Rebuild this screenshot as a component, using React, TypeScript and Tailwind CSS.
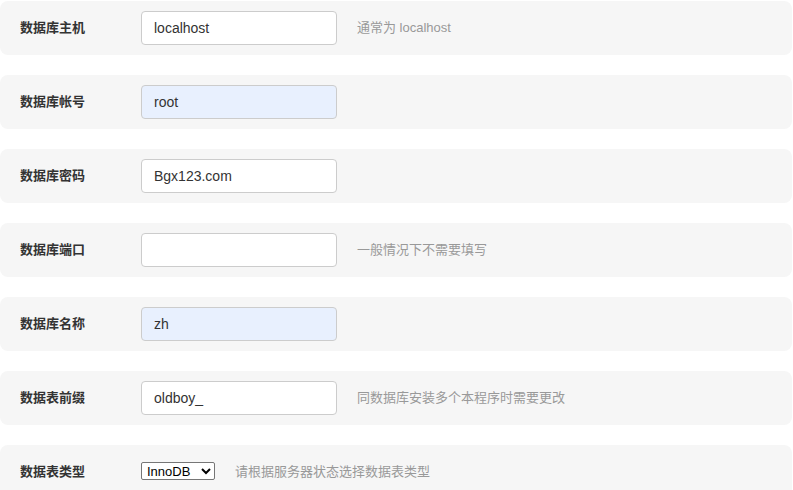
import { useState } from "react";

type Row = {
  label: string;
  value?: string;
  hint?: string;
  filled?: boolean;
  select?: boolean;
};

const rows: Row[] = [
  { label: "数据库主机", value: "localhost", hint: "通常为 localhost" },
  { label: "数据库帐号", value: "root", filled: true },
  { label: "数据库密码", value: "Bgx123.com" },
  { label: "数据库端口", value: "", hint: "一般情况下不需要填写" },
  { label: "数据库名称", value: "zh", filled: true },
  { label: "数据表前缀", value: "oldboy_", hint: "同数据库安装多个本程序时需要更改" },
  { label: "数据表类型", select: true, hint: "请根据服务器状态选择数据表类型" },
];

function FieldRow({ row }: { row: Row }) {
  const [value, setValue] = useState(row.value ?? "");

  return (
    <div className="flex h-[54px] shrink-0 items-center rounded-lg bg-[#f6f6f6] pl-5">
      <label className="w-[121px] shrink-0 text-[13px] font-bold text-[#333]">
        {row.label}
      </label>
      {row.select ? (
        <>
          <select
            defaultValue="InnoDB"
            className="mt-[-3px] h-[18px] w-[74px] rounded-[2px] border border-[#767676] bg-white px-px text-[13px] leading-none text-black [font-family:'Liberation_Sans',Arial,sans-serif]"
          >
            <option>InnoDB</option>
            <option>MyISAM</option>
          </select>
          <span className="ml-5 text-[13px] text-[#999]">{row.hint}</span>
        </>
      ) : (
        <>
          <input
            value={value}
            onChange={(e) => setValue(e.target.value)}
            className={`h-[34px] w-[196px] rounded border border-[#ccc] px-3 text-[14px] text-[#333] outline-none [font-family:'Liberation_Sans',Arial,sans-serif] ${row.filled ? "bg-[#e8f0fe]" : "bg-white"}`}
          />
          {row.hint && (
            <span className="ml-5 text-[13px] text-[#999]">{row.hint}</span>
          )}
        </>
      )}
    </div>
  );
}

export default function App() {
  return (
    <div className="flex h-[490px] w-[793px] flex-col gap-5 overflow-hidden bg-white pt-px pr-px [font-family:'Liberation_Sans','Noto_Sans_CJK_SC',sans-serif]">
      {rows.map((row) => (
        <FieldRow key={row.label} row={row} />
      ))}
    </div>
  );
}
